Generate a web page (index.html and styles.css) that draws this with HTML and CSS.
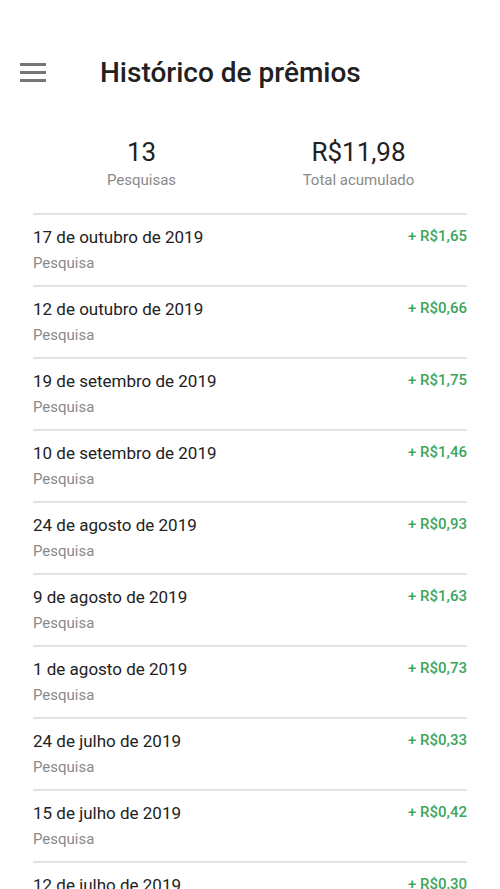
FILE: index.html
```html
<!DOCTYPE html>
<html lang="pt-BR">
<head>
    <meta charset="UTF-8">
    <title>Histórico de prêmios</title>
    <link rel="stylesheet" href="styles.css">
</head>
<body>
    <div class="app">
        <div class="topbar">
            <button class="menu" aria-label="menu">
                <svg width="26" height="20" viewBox="0 0 26 20">
                    <rect x="0" y="1" width="26" height="3" fill="#767676"/>
                    <rect x="0" y="9" width="26" height="3" fill="#767676"/>
                    <rect x="0" y="17" width="26" height="3" fill="#767676"/>
                </svg>
            </button>
            <h1 class="title">Histórico de prêmios</h1>
        </div>

        <div class="stats">
            <div class="stat">
                <div class="stat-value">13</div>
                <div class="stat-label">Pesquisas</div>
            </div>
            <div class="stat">
                <div class="stat-value">R$11,98</div>
                <div class="stat-label">Total acumulado</div>
            </div>
        </div>

        <ul class="history">
            <li class="row">
                <div><div class="date">17 de outubro de 2019</div><div class="kind">Pesquisa</div></div>
                <div class="amount">+ R$1,65</div>
            </li>
            <li class="row">
                <div><div class="date">12 de outubro de 2019</div><div class="kind">Pesquisa</div></div>
                <div class="amount">+ R$0,66</div>
            </li>
            <li class="row">
                <div><div class="date">19 de setembro de 2019</div><div class="kind">Pesquisa</div></div>
                <div class="amount">+ R$1,75</div>
            </li>
            <li class="row">
                <div><div class="date">10 de setembro de 2019</div><div class="kind">Pesquisa</div></div>
                <div class="amount">+ R$1,46</div>
            </li>
            <li class="row">
                <div><div class="date">24 de agosto de 2019</div><div class="kind">Pesquisa</div></div>
                <div class="amount">+ R$0,93</div>
            </li>
            <li class="row">
                <div><div class="date">9 de agosto de 2019</div><div class="kind">Pesquisa</div></div>
                <div class="amount">+ R$1,63</div>
            </li>
            <li class="row">
                <div><div class="date">1 de agosto de 2019</div><div class="kind">Pesquisa</div></div>
                <div class="amount">+ R$0,73</div>
            </li>
            <li class="row">
                <div><div class="date">24 de julho de 2019</div><div class="kind">Pesquisa</div></div>
                <div class="amount">+ R$0,33</div>
            </li>
            <li class="row">
                <div><div class="date">15 de julho de 2019</div><div class="kind">Pesquisa</div></div>
                <div class="amount">+ R$0,42</div>
            </li>
            <li class="row">
                <div><div class="date">12 de julho de 2019</div><div class="kind">Pesquisa</div></div>
                <div class="amount">+ R$0,30</div>
            </li>
        </ul>
    </div>
</body>
</html>
```

FILE: styles.css
```css
html, body{
    margin: 0;
    padding: 0;
    background: #fff;
}
body{
    font-family: Roboto, "Noto Sans", "Liberation Sans", sans-serif;
    color: #222;
    height: 889px;
    overflow: hidden;
}

.topbar{
    display: flex;
    align-items: center;
    height: 40px;
    padding: 52px 0 0 20px;
}
.menu{
    border: 0;
    background: none;
    padding: 0;
    width: 26px;
    height: 20px;
    margin-right: 54px;
    display: flex;
}
.title{
    margin: 0;
    font-size: 28px;
    font-weight: 500;
    color: #212121;
}

.stats{
    display: flex;
    margin: 43px 33px 0;
}
.stat{
    flex: 1;
    text-align: center;
}
.stat-value{
    font-size: 26px;
    line-height: 34px;
    color: #212121;
}
.stat-label{
    font-size: 15px;
    line-height: 23px;
    color: #8a8a8a;
}

.history{
    list-style: none;
    margin: 21px 33px 0;
    padding: 0;
}
.row{
    display: flex;
    justify-content: space-between;
    border-top: 2px solid #e2e2e2;
    height: 72px;
    padding-top: 10px;
    box-sizing: border-box;
}
.date{
    font-size: 17px;
    line-height: 24px;
    color: #222;
}
.kind{
    font-size: 15px;
    line-height: 28px;
    color: #8a8a8a;
}
.amount{
    font-size: 15px;
    font-weight: 500;
    line-height: 22px;
    color: #3ca55c;
}
```
